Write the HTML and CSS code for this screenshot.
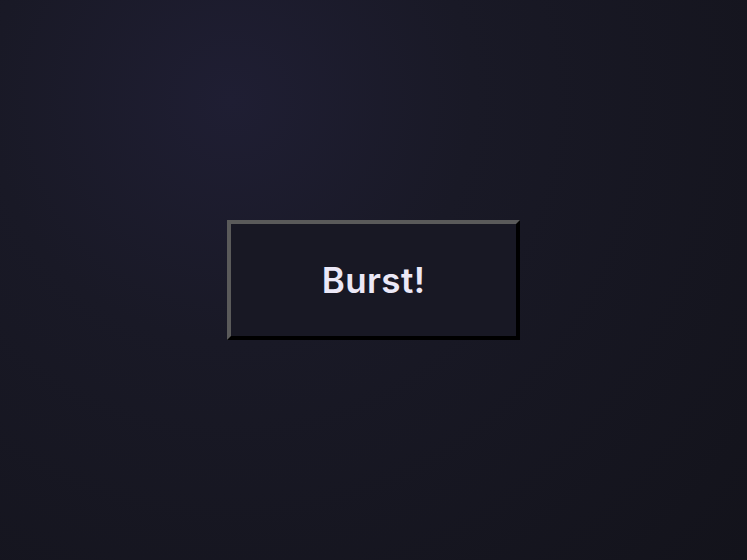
FILE: index.html
```html
<!DOCTYPE html>
<html lang="en">
<head>
    <meta charset="UTF-8">
    <meta name="viewport" content="width=device-width, initial-scale=1.0">
    <title>Burst</title>
    <link rel="stylesheet" href="styles.css">
</head>
<body>
    <div class="stage">
        <button class="burst-button">Burst!</button>
    </div>
</body>
</html>
```

FILE: styles.css
```css
html, body {
    margin: 0;
    height: 100%;
}

body {
    font-family: 'Inter', 'Liberation Sans', sans-serif;
    background: radial-gradient(circle at 31% 18%, #1f1e33 0%, #191926 35%, #13131b 100%);
    background-color: #14141c;
}

.stage {
    height: 100%;
    display: flex;
    align-items: center;
    justify-content: center;
}

.burst-button {
    width: 293px;
    height: 120px;
    background-color: #181824;
    color: #ebe8f7;
    font-family: 'Inter', sans-serif;
    font-size: 35px;
    font-weight: 600;
    letter-spacing: 0.4px;
    border-style: solid;
    border-width: 4px;
    border-color: #5a5a5a #000 #000 #5a5a5a;
    cursor: pointer;
    padding: 0;
}
```
